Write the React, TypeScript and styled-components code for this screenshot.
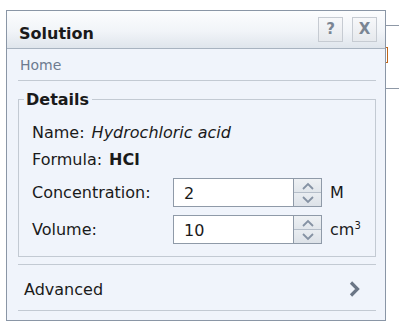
import React from 'react'
import styled, { createGlobalStyle } from 'styled-components'

const Global = createGlobalStyle`
  html, body {
    margin: 0;
    padding: 0;
    background: #ffffff;
  }
  body {
    font-family: "DejaVu Sans", Verdana, sans-serif;
    color: #1a1a1a;
  }
`

const Page = styled.div`
  position: relative;
  width: 399px;
  height: 323px;
  overflow: hidden;
  padding: 10px 0 0 6px;
  box-sizing: border-box;
`

const BackLine = styled.div<{ top: number }>`
  position: absolute;
  left: 386px;
  right: 0;
  top: ${(p) => p.top}px;
  height: 1px;
  background: #8e98a6;
`

const BackBracket = styled.div`
  position: absolute;
  left: 383px;
  top: 47px;
  width: 4px;
  height: 14px;
  border: 1px solid #c0661a;
  border-left: none;
`

const Panel = styled.div`
  width: 380px;
  height: 311px;
  box-sizing: border-box;
  border: 1px solid #8a96a6;
  background: #f0f4fb;
  display: flex;
  flex-direction: column;
  position: relative;
`

const Header = styled.div`
  height: 38px;
  box-sizing: border-box;
  border-bottom: 1px solid #a8b3c0;
  background: linear-gradient(#fcfdfe 0%, #f1f4f8 55%, #dfe5ec 100%);
  display: flex;
  align-items: center;
  padding: 0 8px 0 12px;
`

const Title = styled.div`
  flex: 1;
  margin-top: 7px;
  font-weight: bold;
  font-size: 16px;
`

const ToolButton = styled.button`
  width: 25px;
  height: 25px;
  margin-left: 9px;
  padding: 0;
  border: 1px solid #c6cbd2;
  background: linear-gradient(#f7f8fa, #e6e9ed);
  color: #7a8593;
  font-family: "DejaVu Sans", Verdana, sans-serif;
  font-weight: bold;
  font-size: 15px;
  line-height: 23px;
  text-align: center;
`

const Crumb = styled.div`
  margin: 0 9px 0 11px;
  height: 32px;
  border-bottom: 1px solid #c3cad3;
  box-sizing: border-box;
  display: flex;
  align-items: center;
  padding: 1px 0 0 2px;
  font-size: 14px;
  color: #6d7b8f;
`

const Fieldset = styled.fieldset`
  margin: 9px 9px 0 11px;
  padding: 10px 0 0 13px;
  height: 167px;
  box-sizing: border-box;
  border: 1px solid #c3cad3;
  display: grid;
  grid-template-columns: 141px 1fr;
  grid-auto-rows: auto;
  align-content: start;
  font-size: 16px;
`

const Legend = styled.legend`
  font-weight: bold;
  font-size: 16px;
  padding: 0 3px 0 2px;
  margin-left: -8px;
`

const InfoRow = styled.div<{ h: number }>`
  grid-column: 1 / 3;
  height: ${(p) => p.h}px;
  display: flex;
  align-items: center;
  gap: 7px;
`

const Value = styled.span<{ italic?: boolean; bold?: boolean }>`
  font-style: ${(p) => (p.italic ? 'italic' : 'normal')};
  font-weight: ${(p) => (p.bold ? 'bold' : 'normal')};
`

const Label = styled.div`
  height: 37px;
  display: flex;
  align-items: center;
`

const Field = styled.div`
  height: 37px;
  display: flex;
  align-items: center;
`

const Input = styled.div`
  width: 120px;
  height: 29px;
  box-sizing: border-box;
  border: 1px solid #8f9aa8;
  border-right: none;
  background: #ffffff;
  display: flex;
  align-items: center;
  padding: 2px 0 0 10px;
  font-size: 16px;
`

const Spin = styled.div`
  width: 29px;
  height: 29px;
  box-sizing: border-box;
  border: 1px solid #8f9aa8;
  display: flex;
  flex-direction: column;
`

const SpinHalf = styled.div<{ down?: boolean }>`
  flex: 1;
  background: ${(p) => (p.down ? 'linear-gradient(#e9edf1, #dde2e8)' : 'linear-gradient(#eef1f4, #e1e6eb)')};
  border-top: ${(p) => (p.down ? '1px solid #b5bec9' : 'none')};
  display: flex;
  align-items: center;
  justify-content: center;
`

const Unit = styled.span`
  margin-left: 8px;
  font-size: 16px;
  sup {
    font-size: 10px;
    vertical-align: 6px;
  }
`

const Advanced = styled.div`
  margin: 7px 9px 0 11px;
  height: 47px;
  box-sizing: border-box;
  border-top: 1px solid #c3cad3;
  border-bottom: 1px solid #c3cad3;
  display: flex;
  align-items: center;
  justify-content: space-between;
  padding: 3px 16px 0 6px;
  font-size: 16px;
`

const Chevron = ({ up }: { up: boolean }) => (
  <svg width="14" height="8" viewBox="0 0 14 8">
    <path d={up ? 'M2 7 L7 2 L12 7' : 'M2 1 L7 6 L12 1'} fill="none" stroke="#8592a3" strokeWidth="1.8" />
  </svg>
)

const Arrow = () => (
  <svg width="11" height="16" viewBox="0 0 11 16">
    <path d="M2 1.5 L8.5 8 L2 14.5" fill="none" stroke="#6b7686" strokeWidth="3.2" />
  </svg>
)

const Spinner = () => (
  <Spin>
    <SpinHalf>
      <Chevron up />
    </SpinHalf>
    <SpinHalf down>
      <Chevron up={false} />
    </SpinHalf>
  </Spin>
)

export default function App() {
  return (
    <Page>
      <Global />
      <BackLine top={25} />
      <BackBracket />
      <BackLine top={88} />
      <Panel>
        <Header>
          <Title>Solution</Title>
          <ToolButton>?</ToolButton>
          <ToolButton>X</ToolButton>
        </Header>
        <Crumb>Home</Crumb>
        <Fieldset>
          <Legend>Details</Legend>
          <InfoRow h={26}>
            Name: <Value italic>Hydrochloric acid</Value>
          </InfoRow>
          <InfoRow h={29}>
            Formula: <Value bold>HCl</Value>
          </InfoRow>
          <Label>Concentration:</Label>
          <Field>
            <Input>2</Input>
            <Spinner />
            <Unit>M</Unit>
          </Field>
          <Label>Volume:</Label>
          <Field>
            <Input>10</Input>
            <Spinner />
            <Unit>
              cm<sup>3</sup>
            </Unit>
          </Field>
        </Fieldset>
        <Advanced>
          Advanced
          <Arrow />
        </Advanced>
      </Panel>
    </Page>
  )
}
